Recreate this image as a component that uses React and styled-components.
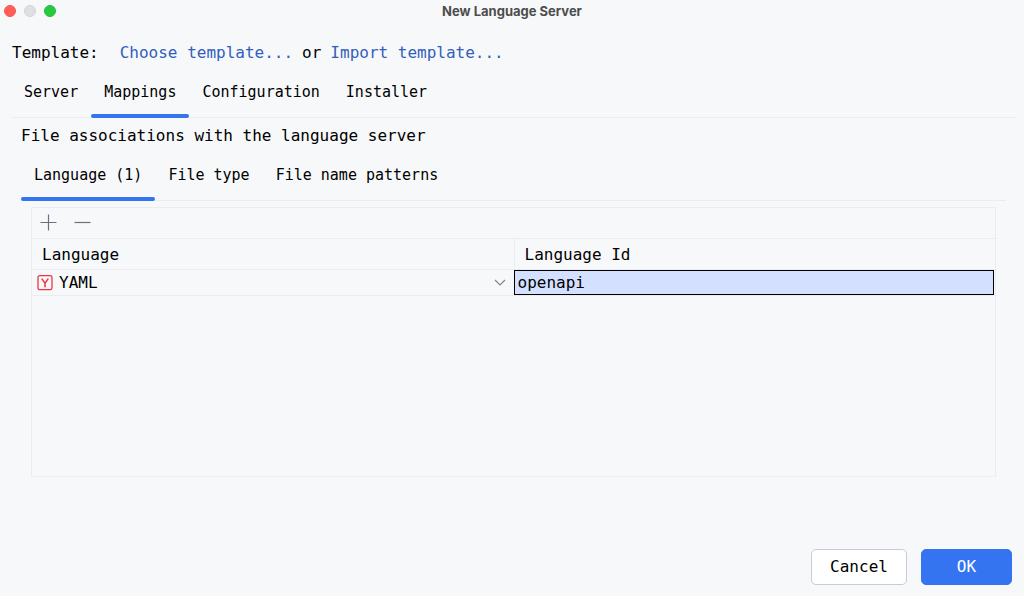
import React, { useState } from "react";
import styled, { createGlobalStyle } from "styled-components";

const line = "#ebecf0";
const accent = "#3574f0";

const GlobalStyle = createGlobalStyle`
  *, *::before, *::after { box-sizing: border-box; }
  body {
    margin: 0;
    background: #f7f8fa;
    color: #000;
    font: 16px/22px "DejaVu Sans Mono", "Liberation Mono", monospace;
  }
  button, input, select { font: inherit; color: inherit; }
`;

const Dialog = styled.main`
  display: flex;
  flex-direction: column;
  min-height: 100vh;
`;

const TitleBar = styled.header`
  display: grid;
  grid-template-columns: 1fr auto 1fr;
  align-items: center;
  height: 22px;
  padding: 0 4px;
`;

const Title = styled.h1`
  margin: 0;
  font: 700 13px/22px Inter, "Liberation Sans", sans-serif;
  color: #4d4d4d;
`;

const WindowControls = styled.div`
  display: flex;
  gap: 8px;
`;

const WindowButton = styled.button`
  width: 12px;
  height: 12px;
  padding: 0;
  border: 1px solid ${(p) => p.$edge};
  border-radius: 50%;
  background: ${(p) => p.$fill};
`;

const TemplateRow = styled.div`
  display: flex;
  gap: 9px;
  padding: 20px 12px 2px;
`;

const TemplateLabel = styled.span`
  margin-right: 12px;
`;

const Link = styled.a`
  color: #315fbd;
  text-decoration: none;
`;

const Panel = styled.section`
  display: flex;
  flex: 1;
  flex-direction: column;
  padding: 0 8px 0 11px;
`;

const SubPanel = styled.section`
  display: flex;
  flex: 1;
  flex-direction: column;
  padding: 0 10px;
`;

const TabList = styled.div`
  display: flex;
  height: 52px;
  background: linear-gradient(${line}, ${line}) 0 51px / 100% 1px no-repeat;
`;

const TabButton = styled.button`
  position: relative;
  padding: 0 13px;
  border: 0;
  background: none;
  font-size: 15px;

  &[aria-selected="true"]::after {
    content: "";
    position: absolute;
    inset: auto 0 0;
    height: 4px;
    border-radius: 2px;
    background: ${accent};
  }
`;

const Heading = styled.h2`
  margin: 0;
  padding: 7px 0 2px;
  font-size: 16px;
  font-weight: 400;
`;

const TableBox = styled.div`
  flex: 1;
  margin: 6px 10px 0;
  border: 1px solid ${line};
`;

const Toolbar = styled.div`
  display: flex;
  align-items: center;
  gap: 16px;
  height: 31px;
  padding: 0 8px;
  border-bottom: 1px solid ${line};
`;

const ToolButton = styled.button`
  display: flex;
  padding: 0;
  border: 0;
  background: none;
  color: #6c707e;
`;

const Table = styled.table`
  width: 100%;
  table-layout: fixed;
  border-spacing: 0;
`;

const HeaderCell = styled.th`
  height: 31px;
  padding: 2px 10px 0;
  border-bottom: 1px solid ${line};
  font-weight: 400;
  text-align: left;

  & + & { border-left: 1px solid ${line}; }
`;

const Cell = styled.td`
  height: 26px;
  padding: 0;
  border-bottom: 1px solid ${line};
`;

const LanguageField = styled.div`
  display: grid;
  grid-template-columns: 16px 1fr 12px;
  align-items: center;
  gap: 6px;
  padding: 0 8px 0 5px;

  svg { pointer-events: none; grid-row: 1; }
  svg:first-child { grid-column: 1; }
  svg:last-child { grid-column: 3; }
`;

const LanguageSelect = styled.select`
  grid-row: 1;
  grid-column: 2 / 4;
  height: 24px;
  padding: 0;
  border: 0;
  outline: 0;
  appearance: none;
  background: none;
`;

const IdInput = styled.input`
  display: block;
  width: calc(100% - 1px);
  height: 25px;
  padding: 0 3px;
  border: 1px solid #000;
  border-radius: 0;
  outline: 0;
  background: #d4e0ff;
`;

const Footer = styled.footer`
  display: flex;
  justify-content: flex-end;
  gap: 14px;
  padding: 72px 12px 11px;
`;

const ActionButton = styled.button`
  min-width: ${(p) => (p.$primary ? "91px" : "96px")};
  height: 36px;
  padding: 0 16px;
  border: 1px solid ${(p) => (p.$primary ? accent : "#c9ccd6")};
  border-radius: 5px;
  background: ${(p) => (p.$primary ? accent : "#fff")};
  color: ${(p) => (p.$primary ? "#fff" : "#000")};
`;

const PlusIcon = () => (
  <svg width="18" height="18" viewBox="0 0 18 18" fill="none" stroke="currentColor" strokeWidth="1.2">
    <path d="M.5 8.5h16M8.5.5v16" />
  </svg>
);

const MinusIcon = () => (
  <svg width="18" height="18" viewBox="0 0 18 18" fill="none" stroke="currentColor" strokeWidth="1.2">
    <path d="M.5 8.5h16" />
  </svg>
);

const YamlIcon = () => (
  <svg width="16" height="16" viewBox="0 0 16 16" fill="none" stroke="#e0394e" strokeWidth="1.3">
    <rect x="1" y=".7" width="14" height="14" rx="1.8" fill="#fff5f5" />
    <path d="M4.7 3.6L8 8.2l3.3-4.6M8 8.2v4" strokeWidth="1.5" />
  </svg>
);

const ChevronIcon = () => (
  <svg width="12" height="12" viewBox="0 0 12 12" fill="none" stroke="#818594" strokeWidth="1.2">
    <path d="M1 3L6 8l5-5" />
  </svg>
);

function Tabs({ label, items, initial }) {
  const [active, setActive] = useState(initial);
  return (
    <TabList role="tablist" aria-label={label}>
      {items.map((item) => (
        <TabButton key={item} role="tab" aria-selected={item === active} onClick={() => setActive(item)}>
          {item}
        </TabButton>
      ))}
    </TabList>
  );
}

export default function App() {
  const [languageId, setLanguageId] = useState("openapi");
  return (
    <Dialog>
      <GlobalStyle />
      <TitleBar>
        <WindowControls>
          <WindowButton aria-label="Close" $fill="#ff5f57" $edge="#f6574f" />
          <WindowButton aria-label="Minimize" $fill="#dfe0e1" $edge="#d2d3d4" />
          <WindowButton aria-label="Zoom" $fill="#28c840" $edge="#24c03b" />
        </WindowControls>
        <Title>New Language Server</Title>
      </TitleBar>
      <TemplateRow>
        <TemplateLabel>Template:</TemplateLabel>
        <Link href="#choose">Choose template...</Link>
        <span>or</span>
        <Link href="#import">Import template...</Link>
      </TemplateRow>
      <Panel>
        <Tabs
          label="Server settings"
          items={["Server", "Mappings", "Configuration", "Installer"]}
          initial="Mappings"
        />
        <SubPanel>
          <Heading>File associations with the language server</Heading>
          <Tabs
            label="Association kind"
            items={["Language (1)", "File type", "File name patterns"]}
            initial="Language (1)"
          />
          <TableBox>
            <Toolbar>
              <ToolButton aria-label="Add"><PlusIcon /></ToolButton>
              <ToolButton aria-label="Remove"><MinusIcon /></ToolButton>
            </Toolbar>
            <Table>
              <thead>
                <tr>
                  <HeaderCell scope="col">Language</HeaderCell>
                  <HeaderCell scope="col">Language Id</HeaderCell>
                </tr>
              </thead>
              <tbody>
                <tr>
                  <Cell>
                    <LanguageField>
                      <YamlIcon />
                      <LanguageSelect aria-label="Language" defaultValue="YAML">
                        <option>YAML</option>
                      </LanguageSelect>
                      <ChevronIcon />
                    </LanguageField>
                  </Cell>
                  <Cell>
                    <IdInput
                      aria-label="Language Id"
                      value={languageId}
                      onChange={(e) => setLanguageId(e.target.value)}
                    />
                  </Cell>
                </tr>
              </tbody>
            </Table>
          </TableBox>
        </SubPanel>
      </Panel>
      <Footer>
        <ActionButton type="button">Cancel</ActionButton>
        <ActionButton type="submit" $primary>OK</ActionButton>
      </Footer>
    </Dialog>
  );
}
